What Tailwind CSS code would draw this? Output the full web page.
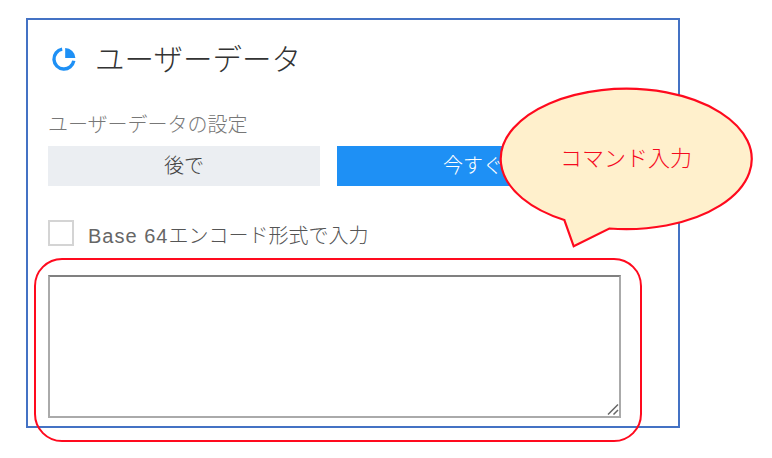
<!DOCTYPE html>
<html lang="ja">
<head>
<meta charset="utf-8">
<script src="https://cdn.jsdelivr.net/npm/@tailwindcss/browser@4"></script>
</head>
<body class="bg-white">
<div class="relative w-[772px] h-[458px] overflow-hidden pt-[18px] pl-[26px] font-['Liberation_Sans','Noto_Sans_CJK_JP',sans-serif]">
  <main class="w-[654px] h-[410px] border-2 border-[#4472c4] pt-[19px] pl-5 pr-[57px] flex flex-col">
    <header class="flex items-center gap-[19px] h-[40px] pl-[4px]">
      <svg class="w-6 h-6" viewBox="0 0 24 24" fill="none"><path d="M10.2 2.2A10 10 0 1 0 21.8 13.8" stroke="#1e90f5" stroke-width="3.4"/><path d="M13.2 1A10.5 10.5 0 0 1 23.4 11H13.2Z" fill="#1e90f5"/></svg>
      <h1 class="text-[29.5px] leading-[40px] text-[#333] font-light mt-[2px]">ユーザーデータ</h1>
    </header>
    <p class="mt-[32px] text-[20px] leading-[28px] text-[#777] font-light">ユーザーデータの設定</p>
    <div class="mt-[7px] grid grid-cols-2 gap-[17px] w-[561px]">
      <button class="h-10 bg-[#ebeef2] text-[20px] text-[#444] font-light">後で</button>
      <button class="h-10 bg-[#1e90f5] text-[20px] text-white font-light">今すぐ</button>
    </div>
    <label class="mt-[34px] flex items-center gap-[14px] h-[26px]">
      <span class="w-[26px] h-[26px] border-2 border-[#d4d4d4] bg-white"></span>
      <span class="text-[20px] text-[#555] font-light mt-[6px]"><span class="tracking-[1px] text-[#666]">Base 64</span>エンコード形式で入力</span>
    </label>
    <div class="relative mt-[29px] w-[573px] h-[143px]">
      <textarea class="block w-full h-full resize-none border-2 border-[#aaa] border-t-[#808080] bg-white"></textarea>
      <svg class="absolute right-[2px] bottom-[3px] w-[12px] h-[12px]" viewBox="0 0 12 12" fill="none" stroke="#666" stroke-width="1.5"><path d="M1 11.5L11 1.5M6.5 11.5L11 7"/></svg>
    </div>
  </main>
  <div class="absolute left-[34px] top-[258px] w-[608px] h-[184px] border-2 border-[#ff0a1e] rounded-[28px]"></div>
  <svg class="absolute left-0 top-0 w-[772px] h-[458px]" viewBox="0 0 772 458" fill="none">
    <path d="M564.3 220A125.5 70.2 0 1 1 609.3 228.5L573.7 246.3Z" fill="#fff0cc" stroke="#ff0a1e" stroke-width="2.2"/>
  </svg>
  <div class="absolute left-[501px] top-[144px] w-[250px] text-center text-[22px] leading-[30px] text-[#f50a1e] font-light">コマンド入力</div>
</div>
</body>
</html>
